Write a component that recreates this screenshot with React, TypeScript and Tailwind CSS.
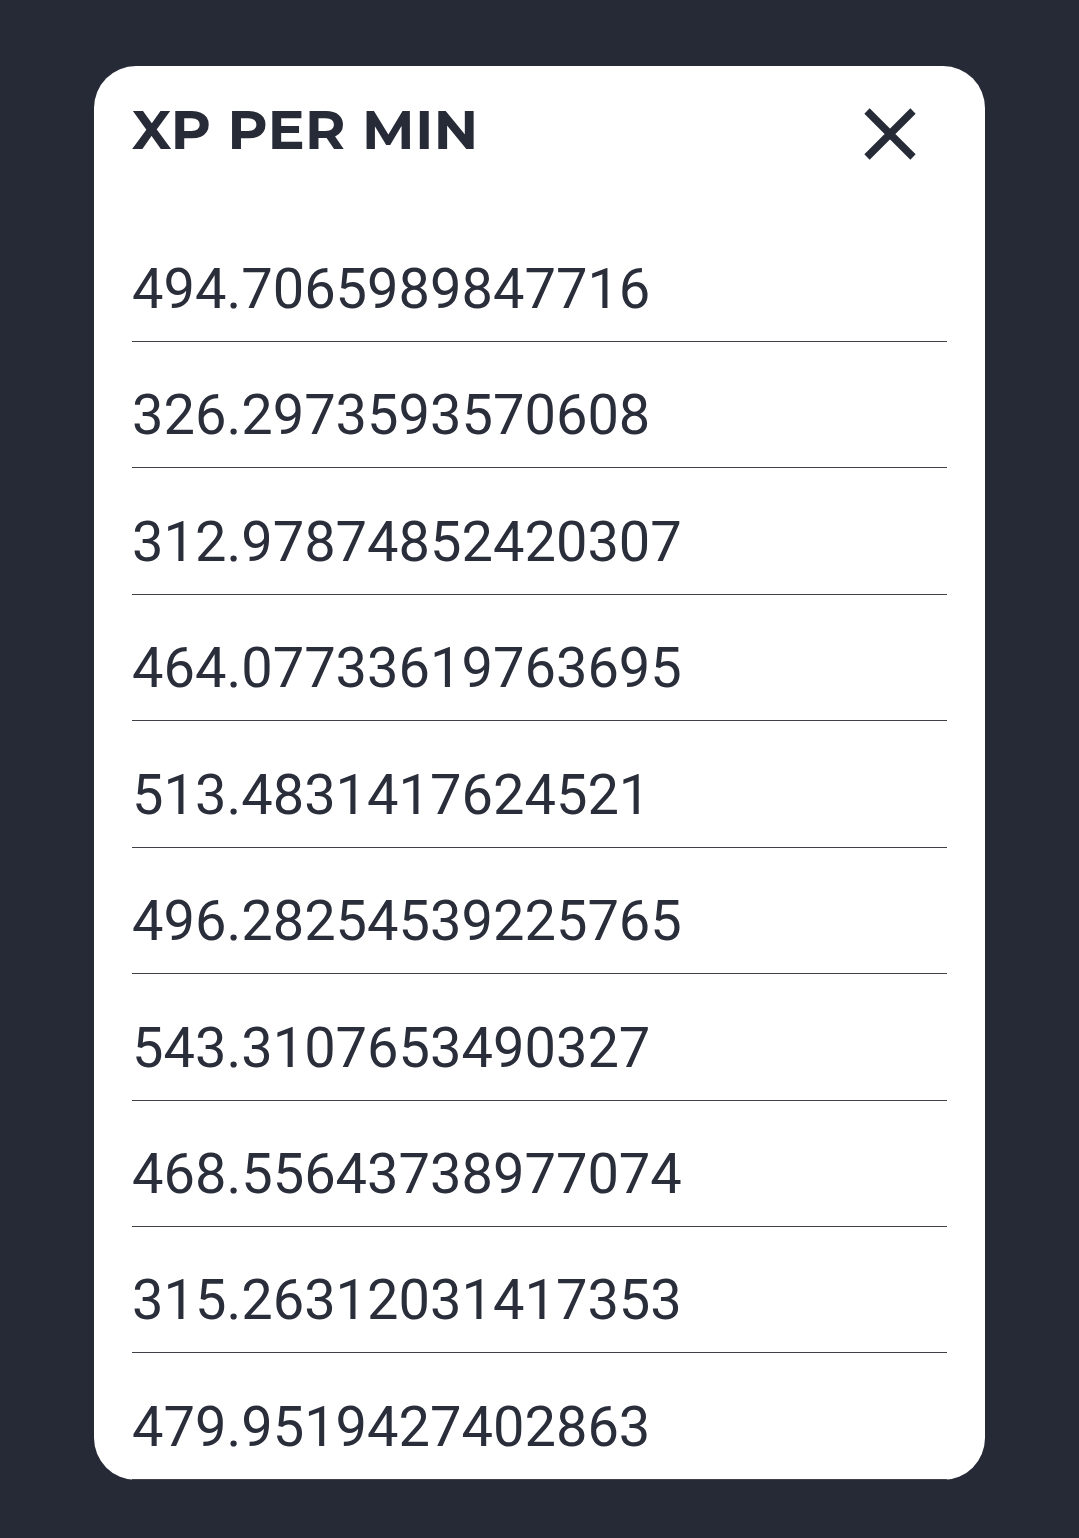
const values = [
  "494.7065989847716",
  "326.2973593570608",
  "312.97874852420307",
  "464.07733619763695",
  "513.4831417624521",
  "496.28254539225765",
  "543.3107653490327",
  "468.55643738977074",
  "315.26312031417353",
  "479.9519427402863",
];

function CloseIcon() {
  return (
    <svg width="54" height="54" viewBox="0 0 54 54" fill="none">
      <path d="M4 4L50 50M50 4L4 50" stroke="#272b37" strokeWidth="7.5" />
    </svg>
  );
}

export default function App() {
  return (
    <div className="min-h-screen w-full bg-[#252a36] pt-[66px]">
      <div className="mx-auto w-[891px] rounded-[42px] bg-white px-[38px]">
        {/* header */}
        <div className="flex h-[149.56px] items-start justify-between pt-[36px]">
          <h1 className="font-['Montserrat','Inter',sans-serif] text-[55px] font-bold leading-[56px] tracking-[0.5px] text-[#272b37]">
            XP PER MIN
          </h1>
          <button className="mr-[30px] mt-[5px]">
            <CloseIcon />
          </button>
        </div>

        {/* list */}
        <ul>
          {values.map((v) => (
            <li
              key={v}
              className="flex h-[126.44px] items-end border-b border-[#3f424b] pb-[19px] font-['Roboto',sans-serif] text-[56px] leading-[66px] text-[#2a2e3a]"
            >
              {v}
            </li>
          ))}
        </ul>
      </div>
    </div>
  );
}
